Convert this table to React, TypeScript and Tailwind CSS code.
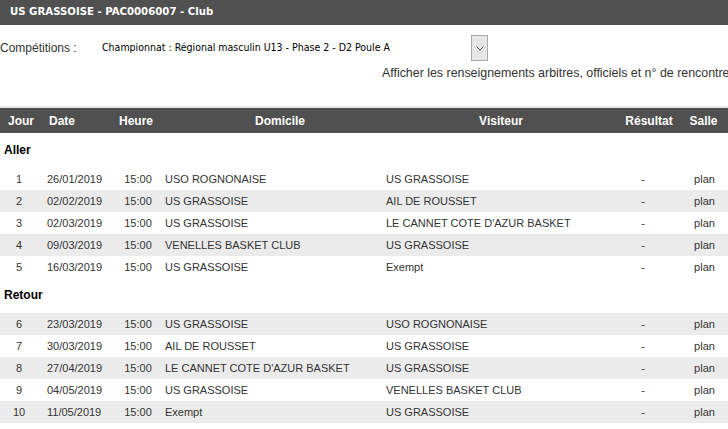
const aller = [
  ['1', '26/01/2019', '15:00', 'USO ROGNONAISE', 'US GRASSOISE'],
  ['2', '02/02/2019', '15:00', 'US GRASSOISE', 'AIL DE ROUSSET'],
  ['3', '02/03/2019', '15:00', 'US GRASSOISE', "LE CANNET COTE D'AZUR BASKET"],
  ['4', '09/03/2019', '15:00', 'VENELLES BASKET CLUB', 'US GRASSOISE'],
  ['5', '16/03/2019', '15:00', 'US GRASSOISE', 'Exempt'],
];

const retour = [
  ['6', '23/03/2019', '15:00', 'US GRASSOISE', 'USO ROGNONAISE'],
  ['7', '30/03/2019', '15:00', 'AIL DE ROUSSET', 'US GRASSOISE'],
  ['8', '27/04/2019', '15:00', "LE CANNET COTE D'AZUR BASKET", 'US GRASSOISE'],
  ['9', '04/05/2019', '15:00', 'US GRASSOISE', 'VENELLES BASKET CLUB'],
  ['10', '11/05/2019', '15:00', 'Exempt', 'US GRASSOISE'],
];

function Row({ r, gray }: { r: string[]; gray: boolean }) {
  return (
    <div className={`flex h-[22px] items-center text-[11px] text-[#333] ${gray ? 'bg-[#ebebeb]' : 'bg-white'}`}>
      <div className="w-[40px] pr-[2px] text-center">{r[0]}</div>
      <div className="w-[70px] pl-[7px]">{r[1]}</div>
      <div className="w-[52px] pl-[4px] text-center">{r[2]}</div>
      <div className="w-[221px] pl-[3px]">{r[3]}</div>
      <div className="w-[236px] pl-[3px]">{r[4]}</div>
      <div className="w-[60px] pr-[12px] text-center">-</div>
      <div className="w-[49px] pl-[2px] text-center">plan</div>
    </div>
  );
}

function Section({ label, rows, startGray }: { label: string; rows: string[][]; startGray: boolean }) {
  return (
    <div>
      <div className="flex h-[35px] items-center pl-[4px] pb-[2px] text-[12px] font-bold text-black">{label}</div>
      {rows.map((r, i) => (
        <Row key={r[0]} r={r} gray={startGray ? i % 2 === 0 : i % 2 === 1} />
      ))}
    </div>
  );
}

export default function App() {
  return (
    <div className="h-[429px] w-[728px] overflow-hidden bg-white" style={{ fontFamily: '"Liberation Sans", Arial, sans-serif' }}>
      <div
        className="flex h-[25px] items-center bg-[#505050] pl-[10px] text-[11.3px] font-bold text-white"
        style={{ fontFamily: '"DejaVu Sans Condensed", "DejaVu Sans", sans-serif' }}
      >
        US GRASSOISE - PAC0006007 - Club
      </div>

      <div className="flex items-center pt-[10px]">
        <div className="w-[102px] text-[12px] text-[#333]">Compétitions :</div>
        <div
          className="w-[369px] text-[10.5px] text-black"
          style={{ fontFamily: '"DejaVu Sans Condensed", "DejaVu Sans", sans-serif' }}
        >
          Championnat : Régional masculin U13 - Phase 2 - D2 Poule A
        </div>
        <div className="flex h-[26px] w-[17px] items-center justify-center border border-[#a9a9a9] bg-[#e6e6e6]">
          <svg width="8" height="5" viewBox="0 0 8 5" fill="none">
            <path d="M0.5 0.5L4 4L7.5 0.5" stroke="#555" strokeWidth="1" />
          </svg>
        </div>
      </div>

      <div className="mt-[5px] overflow-hidden whitespace-nowrap pl-[382px] text-[12.4px] leading-[14px] text-[#333]">
        Afficher les renseignements arbitres, officiels et n° de rencontre
      </div>

      <div className="mt-[26px] h-[2px] bg-[#e6e6e6]" />
      <div className="flex h-[25px] items-center bg-[#505050] text-[12px] font-bold text-white">
        <div className="w-[40px] pl-[2px] text-center">Jour</div>
        <div className="w-[70px] pl-[9px]">Date</div>
        <div className="w-[52px] text-center">Heure</div>
        <div className="w-[221px] pl-[15px] text-center">Domicile</div>
        <div className="w-[236px] text-center">Visiteur</div>
        <div className="w-[60px] text-center">Résultat</div>
        <div className="w-[49px] text-center">Salle</div>
      </div>

      <Section label="Aller" rows={aller} startGray={false} />
      <Section label="Retour" rows={retour} startGray={true} />
    </div>
  );
}
